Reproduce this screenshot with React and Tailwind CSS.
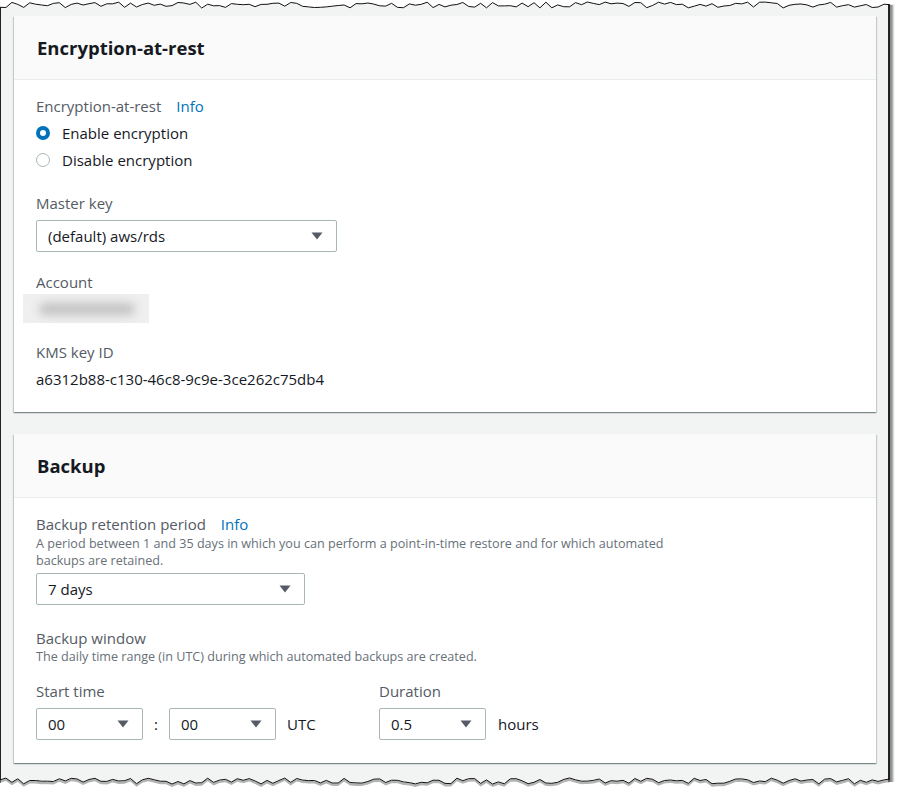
import React from "react";

const font = { fontFamily: '"Open Sans", "Noto Sans", Arial, sans-serif' };

// jagged edge points for the torn-paper frame
const jag = (seed, n, w, base, amp) => {
  let s = seed;
  const pts = [];
  for (let i = 0; i <= n; i++) {
    s = (s * 9301 + 49297) % 233280;
    const r = s / 233280;
    pts.push([(i * w) / n, base + r * amp]);
  }
  return pts;
};

const toStr = (pts, dy = 0) => pts.map(([x, y]) => `${x.toFixed(1)},${(y + dy).toFixed(1)}`).join(" ");

const topPts = jag(17, 150, 890, 2, 6);
const bottomPts = jag(53, 150, 890, 3, 6);

const Caret = () => (
  <svg width="12" height="8" viewBox="0 0 12 8" className="shrink-0">
    <path d="M0.5 0.5 L11.5 0.5 L6 7.5 Z" fill="#545b64" />
  </svg>
);

const Select = ({ value, className }) => (
  <div
    className={
      "flex items-center justify-between h-[32px] pl-[11px] pr-[13px] border border-[#aab7b8] rounded-[2px] bg-white text-[15px] text-[#16191f] " +
      className
    }
  >
    <span>{value}</span>
    <Caret />
  </div>
);

const Radio = ({ checked, label }) => (
  <div className="flex items-center h-5 text-[15px] text-[#16191f]">
    {checked ? (
      <span className="w-[14px] h-[14px] rounded-full border-[4px] border-[#0073bb] bg-white"></span>
    ) : (
      <span className="w-[14px] h-[14px] rounded-full border-[1.5px] border-[#aab7b8] bg-white"></span>
    )}
    <span className="ml-3">{label}</span>
  </div>
);

const Label = ({ children, info }) => (
  <div className="flex items-center h-5 text-[15px] text-[#545b64]">
    <span>{children}</span>
    {info && <span className="ml-[15px] text-[#0073bb]">Info</span>}
  </div>
);

const Card = ({ title, children }) => (
  <div className="bg-white shadow-[0_1px_1px_0_rgba(0,28,36,0.3),1px_1px_1px_0_rgba(0,28,36,0.15),-1px_1px_1px_0_rgba(0,28,36,0.15)]">
    <div className="h-[64px] flex items-center px-[23px] bg-[#fafafa] border-b border-[#eaeded]">
      <h2 className="text-[18.5px] font-bold text-[#16191f]">{title}</h2>
    </div>
    <div className="px-[22px] pt-4 pb-[23px]">{children}</div>
  </div>
);

export default function App() {
  return (
    <div className="relative w-[900px] h-[793px] bg-white overflow-hidden" style={font}>
      <div className="w-[890px] h-[790px] bg-[#f2f3f3] border-l border-r-2 border-[#222] shadow-[3px_0_2px_rgba(0,0,0,0.45)] pl-[13px] pr-[12px] pt-[16px]">
        <Card title="Encryption-at-rest">
          <Label info>Encryption-at-rest</Label>
          <div className="mt-[7px]">
            <Radio checked label="Enable encryption" />
          </div>
          <div className="mt-[7px]">
            <Radio label="Disable encryption" />
          </div>

          <div className="mt-[23px]">
            <Label>Master key</Label>
          </div>
          <Select value="(default) aws/rds" className="mt-[7px] w-[301px]" />

          <div className="mt-5">
            <Label>Account</Label>
          </div>
          <div className="mt-[2px] -ml-[13px] w-[126px] h-[29px] bg-[#efefef] overflow-hidden flex items-center">
            <div className="ml-4 w-[96px] h-[12px] rounded-full bg-[#c2c2c2] blur-[5px]"></div>
          </div>

          <div className="mt-[19px]">
            <Label>KMS key ID</Label>
          </div>
          <div className="mt-[7px] h-5 flex items-center text-[15px] text-[#16191f]">
            a6312b88-c130-46c8-9c9e-3ce262c75db4
          </div>
        </Card>

        <div className="mt-[22px]">
          <Card title="Backup">
            <Label info>Backup retention period</Label>
            <div className="mt-[1px] text-[12.6px] leading-[17px] text-[#687078]">
              A period between 1 and 35 days in which you can perform a point-in-time restore and for which automated
              <br />
              backups are retained.
            </div>
            <Select value="7 days" className="mt-1 w-[269px]" />

            <div className="mt-[23px]">
              <Label>Backup window</Label>
            </div>
            <div className="text-[12.6px] leading-[17px] text-[#687078]">
              The daily time range (in UTC) during which automated backups are created.
            </div>

            <div className="mt-4 flex">
              <div className="w-[343px]">
                <Label>Start time</Label>
                <div className="mt-[7px] flex items-center">
                  <Select value="00" className="w-[107px]" />
                  <span className="w-[26px] text-center text-[15px] text-[#16191f]">:</span>
                  <Select value="00" className="w-[107px]" />
                  <span className="ml-[11px] text-[15px] text-[#16191f]">UTC</span>
                </div>
              </div>
              <div>
                <Label>Duration</Label>
                <div className="mt-[7px] flex items-center">
                  <Select value="0.5" className="w-[107px]" />
                  <span className="ml-[12px] text-[15px] text-[#16191f]">hours</span>
                </div>
              </div>
            </div>
          </Card>
        </div>
      </div>

      {/* torn paper edges */}
      <svg className="absolute top-0 left-0" width="900" height="12">
        <polygon points={`0,0 ${toStr(topPts)} 900,${topPts[topPts.length - 1][1]} 900,0`} fill="#fff" />
        <polyline points={toStr(topPts)} fill="none" stroke="#111" strokeWidth="1" />
      </svg>
      <svg className="absolute top-[775px] left-0" width="900" height="18">
        <polyline points={toStr(bottomPts, 2)} fill="none" stroke="#888" strokeWidth="3" opacity="0.6" />
        <polygon points={`0,18 ${toStr(bottomPts, 3)} 900,${bottomPts[bottomPts.length - 1][1] + 3} 900,18`} fill="#fff" />
        <polyline points={toStr(bottomPts)} fill="none" stroke="#111" strokeWidth="1" />
      </svg>
    </div>
  );
}
